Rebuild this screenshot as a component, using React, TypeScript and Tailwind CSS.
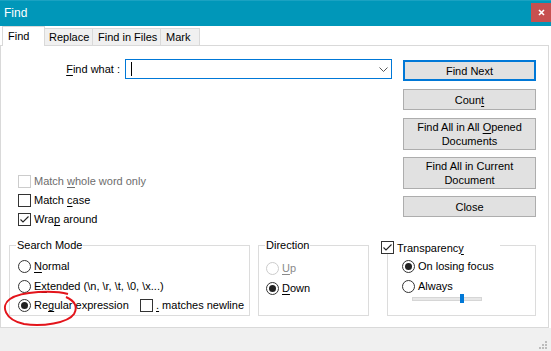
import React from "react";

const F = { fontFamily: '"Liberation Sans", Arial, sans-serif' };

function U({ children }: { children: React.ReactNode }) {
  return <span className="underline underline-offset-[2px] decoration-[1px]">{children}</span>;
}

function Check({ checked, disabled }: { checked?: boolean; disabled?: boolean }) {
  return (
    <span
      className={`relative inline-block w-[13px] h-[13px] shrink-0 border bg-white ${
        disabled ? "border-[#cccccc]" : "border-[#333333]"
      }`}
    >
      {checked && (
        <svg className="absolute left-0 top-0" width="11" height="11" viewBox="0 0 11 11">
          <polyline points="1.5,5.5 4,8 9.5,2.5" fill="none" stroke="#222" strokeWidth="1.1" />
        </svg>
      )}
    </span>
  );
}

function Radio({ checked, disabled }: { checked?: boolean; disabled?: boolean }) {
  return (
    <span
      className={`flex items-center justify-center w-[13px] h-[13px] shrink-0 rounded-full border bg-white ${
        disabled ? "border-[#cccccc]" : "border-[#333333]"
      }`}
    >
      {checked && <span className="block w-[7px] h-[7px] rounded-full bg-[#222]" />}
    </span>
  );
}

function Btn({ children, h, primary }: { children: React.ReactNode; h: string; primary?: boolean }) {
  return (
    <div
      className={`w-[133px] ${h} flex items-center justify-center text-center leading-[14px] bg-[#e1e1e1] ${
        primary ? "border-2 border-[#0078d7]" : "border border-[#adadad]"
      }`}
    >
      {children}
    </div>
  );
}

export default function App() {
  return (
    <div
      className="w-[551px] h-[351px] overflow-hidden bg-white text-[11px] text-black relative whitespace-nowrap"
      style={F}
    >
      {/* Title bar */}
      <div className="h-[26px] bg-[#0097b9] border-t border-[#1aa2c2] flex items-start">
        <div className="pl-[4px] pt-[4px] text-white text-[12px] leading-[16px]">Find</div>
        <div className="ml-auto mt-[2px] w-[20px] h-[19px] bg-[#c75050] flex items-center justify-center">
          <svg width="7" height="7" viewBox="0 0 7 7">
            <path d="M1 1 L6 6 M6 1 L1 6" stroke="white" strokeWidth="1.6" />
          </svg>
        </div>
      </div>

      {/* Tabs */}
      <div className="h-[19px] flex items-end pl-[2px] relative z-10">
        <div className="w-[43px] h-[20px] -mb-px bg-white border-t border-l border-r border-[#d9d9d9] pl-[5px] leading-[18px]">
          Find
        </div>
        <div className="w-[48px] h-[17px] bg-[#f0f0f0] border-t border-r border-[#d9d9d9] pl-[4px] leading-[17px]">
          Replace
        </div>
        <div className="w-[68px] h-[17px] bg-[#f0f0f0] border-t border-r border-[#d9d9d9] pl-[5px] leading-[17px]">
          Find in Files
        </div>
        <div className="w-[39px] h-[17px] bg-[#f0f0f0] border-t border-r border-[#d9d9d9] pl-[5px] leading-[17px]">
          Mark
        </div>
      </div>

      {/* Panel */}
      <div className="w-[549px] h-[283px] border border-[#d9d9d9] bg-white flex flex-col relative">
        <div className="flex">
          {/* left */}
          <div className="w-[402px]">
            <div className="mt-[13px] flex items-center h-[20px]">
              <div className="w-[124px] text-right pr-[5px] leading-[16px]">
                <U>F</U>ind what :
              </div>
              <div className="w-[267px] h-[20px] border border-[#0078d7] flex items-center relative">
                <span className="ml-[5px] block w-px h-[14px] bg-black" />
                <svg className="absolute right-[3px] top-[7px]" width="9" height="5" viewBox="0 0 9 5">
                  <polyline points="0.5,0.5 4.5,4.5 8.5,0.5" fill="none" stroke="#555" strokeWidth="1" />
                </svg>
              </div>
            </div>
            <div className="mt-[93px] pl-[17px]">
              <div className="h-[19px] flex items-center gap-[3px] text-[#6d6d6d]">
                <Check disabled />
                <span>
                  Match <U>w</U>hole word only
                </span>
              </div>
              <div className="h-[19px] flex items-center gap-[3px]">
                <Check />
                <span>
                  Match <U>c</U>ase
                </span>
              </div>
              <div className="h-[19px] flex items-center gap-[3px]">
                <Check checked />
                <span>
                  Wra<U>p</U> around
                </span>
              </div>
            </div>
          </div>
          {/* right buttons */}
          <div className="flex flex-col">
            <div className="mt-[14px]">
              <Btn h="h-[21px]" primary>
                Find Next
              </Btn>
            </div>
            <div className="mt-[8px]">
              <Btn h="h-[21px]">
                Coun<U>t</U>
              </Btn>
            </div>
            <div className="mt-[8px]">
              <Btn h="h-[32px]">
                <span>
                  Find All in All <U>O</U>pened
                  <br />
                  Documents
                </span>
              </Btn>
            </div>
            <div className="mt-[7px]">
              <Btn h="h-[32px]">
                <span>
                  Find All in Current
                  <br />
                  Document
                </span>
              </Btn>
            </div>
            <div className="mt-[7px]">
              <Btn h="h-[21px]">Close</Btn>
            </div>
          </div>
        </div>

        {/* group boxes */}
        <div className="mt-[16px] flex items-start pl-[8px]">
          {/* Search Mode */}
          <div className="relative w-[241px] h-[71px] border border-[#dcdcdc] pl-[8px] pt-[10px]">
            <span className="absolute left-[6px] top-[-9px] bg-white px-[1px] leading-[16px]">Search Mode</span>
            <div className="h-[20px] flex items-center gap-[3px]">
              <Radio />
              <span>
                <U>N</U>ormal
              </span>
            </div>
            <div className="h-[20px] flex items-center gap-[3px]">
              <Radio />
              <span>
                E<U>x</U>tended (\n, \r, \t, \0, \x...)
              </span>
            </div>
            <div className="h-[19px] flex items-center gap-[3px]">
              <Radio checked />
              <span className="w-[103px]">
                Re<U>g</U>ular expression
              </span>
              <span className="flex items-center gap-[3px]">
                <Check />
                <span>
                  <U>.</U> matches newline
                </span>
              </span>
            </div>
          </div>

          {/* Direction */}
          <div className="ml-[8px] relative w-[111px] h-[71px] border border-[#dcdcdc] pl-[7px] pt-[12px]">
            <span className="absolute left-[6px] top-[-9px] bg-white px-[1px] leading-[16px]">Direction</span>
            <div className="h-[20px] flex items-center gap-[3px] text-[#8a8a8a]">
              <Radio disabled />
              <span>
                <U>U</U>p
              </span>
            </div>
            <div className="h-[20px] flex items-center gap-[3px]">
              <Radio checked />
              <span>
                <U>D</U>own
              </span>
            </div>
          </div>

          {/* Transparency */}
          <div className="ml-[18px] relative w-[149px] h-[71px] border border-[#dcdcdc] pl-[14px] pt-[10px]">
            <span className="absolute left-[-7px] top-[-5px] w-[119px] h-[13px] bg-white flex items-center gap-[3px]">
              <Check checked />
              <span className="leading-[16px]">
                Transparenc<U>y</U>
              </span>
            </span>
            <div className="h-[20px] flex items-center gap-[3px]">
              <Radio checked />
              <span>On losing focus</span>
            </div>
            <div className="h-[20px] flex items-center gap-[3px]">
              <Radio />
              <span>Always</span>
            </div>
            <div className="ml-[10px] mt-[1px] relative w-[70px] h-[4px] bg-[#e7e7e7] border border-[#d6d6d6]">
              <span className="absolute left-[47px] top-[-4px] w-[4px] h-[9px] bg-[#0078d7]" />
            </div>
          </div>
        </div>

        {/* red hand-drawn ellipse */}
        <svg className="absolute left-[1px] top-[244px]" width="78" height="38" viewBox="0 0 78 38">
          <path
            d="M66 4 C52 0, 20 1, 8 9 C-2 16, 3 30, 22 34 C40 37, 66 33, 72 24 C76 17, 73 11, 64 7"
            fill="none"
            stroke="#e3141b"
            strokeWidth="2"
          />
        </svg>
      </div>

      {/* bottom strip */}
      <div className="h-[23px] bg-[#f0f0f0] relative">
        <svg className="absolute right-[3px] bottom-[1px]" width="9" height="9" viewBox="0 0 9 9">
          <rect x="6" y="0" width="2" height="2" fill="#bcbcbc" />
          <rect x="3" y="3" width="2" height="2" fill="#bcbcbc" />
          <rect x="6" y="3" width="2" height="2" fill="#bcbcbc" />
          <rect x="0" y="6" width="2" height="2" fill="#bcbcbc" />
          <rect x="3" y="6" width="2" height="2" fill="#bcbcbc" />
          <rect x="6" y="6" width="2" height="2" fill="#bcbcbc" />
        </svg>
      </div>
    </div>
  );
}
